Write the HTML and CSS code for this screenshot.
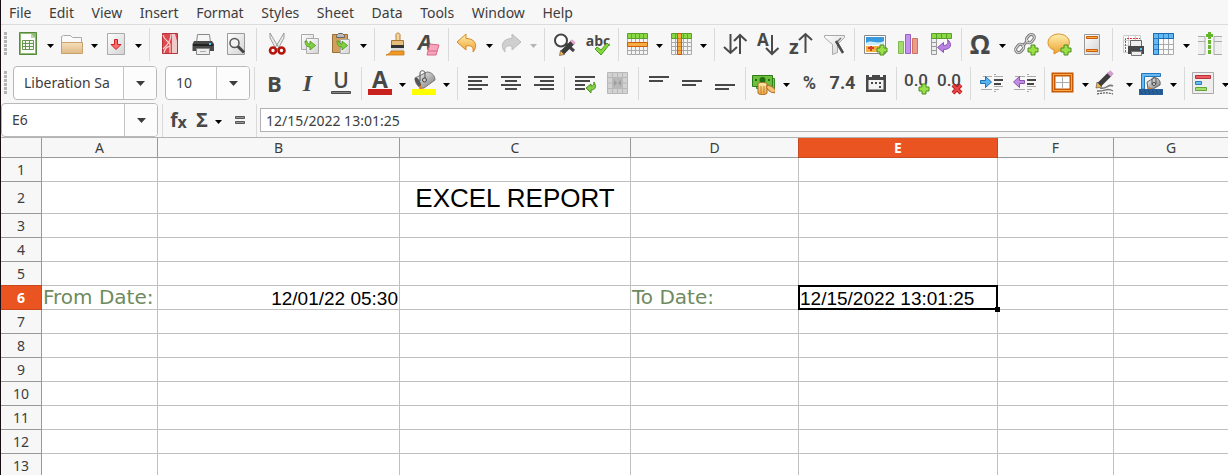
FILE: index.html
```html
<!DOCTYPE html>
<html lang="en">
<head>
<meta charset="utf-8">
<title>Spreadsheet</title>
<link rel="stylesheet" href="styles.css">
</head>
<body>
<svg class="defs" aria-hidden="true">
  <defs>
    <linearGradient id="paper" x2="1" y2="1"><stop offset="0" stop-color="#fff"/><stop offset="1" stop-color="#d2d2d2"/></linearGradient>
    <linearGradient id="tan" x2="0" y2="1"><stop offset="0" stop-color="#f5dfbd"/><stop offset="1" stop-color="#dfb984"/></linearGradient>
    <linearGradient id="gold" x2="0" y2="1"><stop offset="0" stop-color="#fff0b0"/><stop offset="1" stop-color="#eea02c"/></linearGradient>
    <linearGradient id="metal" x2="1" y2="1"><stop offset="0" stop-color="#fafafa"/><stop offset="1" stop-color="#777"/></linearGradient>
    <symbol id="plus" viewBox="0 0 12 12"><path d="M4 1h4v3h3v4H8v3H4V8H1V4h3z" fill="#9be048" stroke="#4b8f1c"/></symbol>
    <symbol id="arrow" viewBox="0 0 7 4"><path d="M0 0h7L3.500 4z"/></symbol>
    <symbol id="go" viewBox="0 0 12 12"><path d="M1 2C1 6 3 8 6 8v3l5.500-4.500L6 2v3C4 5 3 4 3 2z" fill="#7fd13e" stroke="#4b8f1c" stroke-width=".8"/></symbol>
    <symbol id="coin-hand" viewBox="0 0 24 24"><path d="M7 12c0-2 9-2 9 0v9c0 2-9 2-9 0z" fill="url(#gold)" stroke="#a9692b"/><path d="M10 14v7m3-7v7" stroke="#b98349"/><ellipse cx="20" cy="17" rx="5" ry="2.500" transform="rotate(35 20 17)" fill="#f6c070" stroke="#a9692b"/></symbol>
  </defs>
</svg>
<div class="app">
  <nav class="menubar" aria-label="Main menu">
    <div class="menus"><button>File</button><button>Edit</button><button>View</button><button>Insert</button><button>Format</button><button>Styles</button><button>Sheet</button><button>Data</button><button>Tools</button><button>Window</button><button>Help</button></div>
  </nav>

  <div class="toolbar standard" role="toolbar" aria-label="Standard">
    <span class="grip"></span>
    <button class="tool drop" aria-label="New">
      <svg class="icon" viewBox="0 0 24 24"><path d="M3.500.500h17v22h-17z" fill="#8fbb72" stroke="#568a3c"/><path d="M5 2h10l4 4v15H5z" fill="#fff"/><path d="M15 2v4h4z" fill="#b8d6a4"/><path d="M6.500 8.500h11v9h-11zM6.500 11.500h11m-11 3h11m-8-6v9m4-9v9" fill="#f3f8ef" stroke="#69964f"/></svg>
      <svg class="arrow"><use href="#arrow"/></svg></button>
    <button class="tool drop" aria-label="Open">
      <svg class="icon" viewBox="0 0 24 24"><path d="M1.500 21.500v-17l2-1h7l2 2h9v6" fill="#fafafa" stroke="#aaa"/><path d="M1.500 10.500h21v11h-21z" fill="url(#tan)" stroke="#c9a16c"/></svg>
      <svg class="arrow"><use href="#arrow"/></svg></button>
    <button class="tool drop" aria-label="Save">
      <svg class="icon" viewBox="0 0 24 24"><path d="M3.500 1.500h17v21h-17z" fill="url(#paper)" stroke="#aaa"/><path d="M10.500 7.500h3v5h3.500L12 17.500 7 12.500h3.500z" fill="#ff6b6b" stroke="#c92323"/></svg>
      <svg class="arrow"><use href="#arrow"/></svg></button>
    <span class="sep"></span>
    <button class="tool" aria-label="Export as PDF">
      <svg class="icon" viewBox="0 0 24 24"><path d="M4.500 1.500h15v20h-15z" fill="#dc4a50" stroke="#b5343a"/><path d="M14 2h3l2 7v12h-5z" fill="#f0c9c9"/><path d="M13 2c0 7-3 11-8 15M5 3c1 5 5 6 7 9v9M6 21c1-5 3-6 6-7" fill="none" stroke="#f8d3d3" stroke-width="1.200"/></svg></button>
    <button class="tool" aria-label="Print">
      <svg class="icon" viewBox="0 0 24 24"><path d="M6.500 2.500h12l1 8h-14z" fill="#f6f6f6" stroke="#888"/><path d="M3 9h18l2 3v7H1.500v-7z" fill="#4a4a4a"/><path d="M2 12h20v2H2z" fill="#222"/><path d="M18 11h2v2h-2z" fill="#4fc3ff"/><path d="M5.500 16.500h13v6h-13z" fill="#eee" stroke="#888"/><path d="M9 19.500h6" stroke="#aaa"/></svg></button>
    <button class="tool" aria-label="Print preview">
      <svg class="icon" viewBox="0 0 24 24"><path d="M3.500 1.500h17v21h-17z" fill="url(#paper)" stroke="#999"/><circle cx="10.500" cy="11" r="4.500" fill="#f2f2f2" stroke="#555" stroke-width="1.500"/><path d="M14 14.500l6 6" stroke="#444" stroke-width="3"/></svg></button>
    <span class="sep"></span>
    <button class="tool" aria-label="Cut">
      <svg class="icon" viewBox="0 0 24 24"><path d="M5 1l9 15-3 1-6-11zM19 1l-9 15 3 1 6-11z" fill="#e9e9e9" stroke="#888" stroke-width=".8"/><ellipse cx="8" cy="18.500" rx="3" ry="3" fill="none" stroke="#b5150c" stroke-width="2.600"/><ellipse cx="16.500" cy="18.500" rx="3" ry="3" fill="none" stroke="#b5150c" stroke-width="2.600"/></svg></button>
    <button class="tool" aria-label="Copy">
      <svg class="icon" viewBox="0 0 24 24"><path d="M3.500 2.500h12v15h-12z" fill="url(#paper)" stroke="#aaa"/><path d="M8.500 6.500h12v15h-12z" fill="url(#paper)" stroke="#aaa"/><use href="#go" x="6" y="7" width="12" height="12"/></svg></button>
    <button class="tool drop" aria-label="Paste">
      <svg class="icon" viewBox="0 0 24 24"><path d="M3.500 2.500h15v18h-15z" fill="#d1a05c" stroke="#9b6f35"/><path d="M7.500 5.500v-2l2-2h4l2 2v2z" fill="#bbb" stroke="#666"/><path d="M11.500 7.500h9v14h-9z" fill="url(#paper)" stroke="#aaa"/><use href="#go" x="7" y="7" width="12" height="12"/></svg>
      <svg class="arrow"><use href="#arrow"/></svg></button>
    <span class="sep"></span>
    <button class="tool" aria-label="Clone formatting">
      <svg class="icon" viewBox="0 0 24 24"><path d="M13 9V4c-1-4 5-4 4 0v5" fill="#f3d49b" stroke="#b98340"/><path d="M8.500 8.500h12v5h-12z" fill="#e7bd7b" stroke="#a97638"/><path d="M8 13h13v4H8z" fill="#333"/><path d="M8 16h13v3H8z" fill="#ddd"/><path d="M8 19h13v4H3c3-1 4-2 5-4z" fill="#ef9a24" stroke="#c9761b" stroke-width=".8"/></svg></button>
    <button class="tool" aria-label="Clear direct formatting">
      <svg class="icon" viewBox="0 0 24 24"><text class="glyph slant" x="2" y="18" font-size="22">A</text><path d="M14 12l9 1-3 10h-9z" fill="#f7a6bd" stroke="#d96787"/><path d="M12 19h9" stroke="#d96787"/></svg></button>
    <span class="sep"></span>
    <button class="tool drop" aria-label="Undo">
      <svg class="icon" viewBox="0 0 24 24"><path d="M2 10l9-8v4.500c10 0 12 8 7 13.500 1-5-2-7-7-6V18z" fill="url(#gold)" stroke="#d58a25"/></svg>
      <svg class="arrow"><use href="#arrow"/></svg></button>
    <button class="tool drop" aria-label="Redo" disabled>
      <svg class="icon" viewBox="0 0 24 24"><path d="M22 10l-9-8v4.500c-10 0-12 8-7 13.500-1-5 2-7 7-6V18z" fill="#cfcfcf" stroke="#bcbcbc"/></svg>
      <svg class="arrow"><use href="#arrow"/></svg></button>
    <span class="sep"></span>
    <button class="tool" aria-label="Find and replace">
      <svg class="icon" viewBox="0 0 24 24"><circle cx="8" cy="8.500" r="6" fill="#fff" stroke="#444" stroke-width="2"/><path d="M13 12l8 7" stroke="#444" stroke-width="3"/><path d="M9 21L20 10" stroke="#3b3b3b" stroke-width="5"/><path d="M19 11l2-2" stroke="#e9a6cf" stroke-width="5"/><path d="M6.500 23.500l1-5 4 4z" fill="#f2b64c" stroke="#333" stroke-width=".5"/></svg></button>
    <button class="tool" aria-label="Spelling">
      <svg class="icon" viewBox="0 0 24 24"><text class="glyph" x="12" y="14" text-anchor="middle" font-size="14">abc</text><path d="M9 17l2-2 4 3 6-7 2 2-8 10z" fill="#83d93e" stroke="#4b9a1c"/></svg></button>
    <span class="sep"></span>
    <button class="tool drop" aria-label="Row">
      <svg class="icon" viewBox="0 0 24 24"><path d="M2.500 6.500h20v16h-20zM2.500 14.500h20m-20 4h20m-16-12v16m4-16v16m4-16v16m4-16v16" fill="#f4f4f4" stroke="#aaa"/><path d="M2.500 1.500h20v5h-20z" fill="#8bd846" stroke="#5a9e2b"/><path d="M6.500 2v4m4-4v4m4-4v4m4-4v4" stroke="#5eae2c"/><path d="M2.500 10.500h20v4h-20z" fill="#f8ad42" stroke="#cc5c0c"/></svg>
      <svg class="arrow"><use href="#arrow"/></svg></button>
    <button class="tool drop" aria-label="Column">
      <svg class="icon" viewBox="0 0 24 24"><path d="M2.500 6.500h20v16h-20zM2.500 10.500h20m-20 4h20m-20 4h20m-16-12v16m8-16v16m4-16v16" fill="#f4f4f4" stroke="#aaa"/><path d="M2.500 1.500h20v5h-20z" fill="#8bd846" stroke="#5a9e2b"/><path d="M6.500 2v4m8-4v4m4-4v4" stroke="#5eae2c"/><path d="M8.500 1.500h4v21h-4z" fill="#f8ad42" stroke="#cc5c0c"/><path d="M9 6.500h3m-3 4h3m-3 4h3m-3 4h3" stroke="#dc7d1f"/></svg>
      <svg class="arrow"><use href="#arrow"/></svg></button>
    <span class="sep"></span>
    <button class="tool" aria-label="Sort">
      <svg class="icon line" viewBox="0 0 24 24"><path d="M7.500 2v19M1 15l6.500 6 6.500-6M17 22V3M11 9l6-6 6.500 6"/></svg></button>
    <button class="tool" aria-label="Sort ascending">
      <svg class="icon line" viewBox="0 0 24 24"><text class="glyph" x="1" y="14" font-size="17">A</text><path d="M16 3v19M10 16l6 6 6.500-6"/></svg></button>
    <button class="tool" aria-label="Sort descending">
      <svg class="icon line" viewBox="0 0 24 24"><text class="glyph" x="0" y="22" font-size="20">z</text><path d="M16.500 21V2M10 8l6.500-6L23 8"/></svg></button>
    <button class="tool" aria-label="AutoFilter">
      <svg class="icon" viewBox="0 0 24 24"><path d="M2.500 3.500h20v2l-7 7v8l-5 2v-10l-8-7z" fill="url(#paper)" stroke="#aaa"/><path d="M19 6l-5 5" stroke="#777" stroke-width="1.500"/><path d="M14 9l7 12" stroke="#4a4a4a" stroke-width="2.500"/></svg></button>
    <span class="sep"></span>
    <button class="tool" aria-label="Image">
      <svg class="icon" viewBox="0 0 24 24"><path d="M1.500 3.500h21v18h-21z" fill="#fff" stroke="#888"/><path d="M3 5h18v7H3z" fill="#3999df"/><path d="M3 11c6-4 10 2 18-2v4H3z" fill="#cceefa"/><path d="M3 14h18v6H3z" fill="#f4b143"/><path d="M5 16h6M8 14v5" stroke="#d3412b" stroke-width="2"/><use href="#plus" x="13" y="12" width="12" height="12"/></svg></button>
    <button class="tool" aria-label="Chart">
      <svg class="icon" viewBox="0 0 24 24"><path d="M2.500 9.500h5v12h-5z" fill="#a4dc70" stroke="#80b954"/><path d="M9.500 2.500h5v19h-5z" fill="#c393eb" stroke="#9860c7"/><path d="M16.500 6.500h5v15h-5z" fill="#ee9c8a" stroke="#cf705c"/></svg></button>
    <button class="tool" aria-label="Pivot table">
      <svg class="icon" viewBox="0 0 24 24"><path d="M2.500 6.500h5v16h-5zM2.500 10.500h5m-5 4h5m-5 4h5" fill="#eee" stroke="#999"/><path d="M2.500 1.500h20v5h-20z" fill="#8bd846" stroke="#5a9e2b"/><path d="M7.500 2v4m5-4v4m5-4v4" stroke="#5a9e2b"/><path d="M8.500 15.500l6-5v3c4 0 5-2 4-6 5 4 4 10-4 10v3z" fill="#ba82e2" stroke="#8b55b5"/></svg></button>
    <span class="sep"></span>
    <button class="tool drop" aria-label="Special character">
      <svg class="icon" viewBox="0 0 24 24"><text class="glyph" x="12" y="22" text-anchor="middle" font-size="26">Ω</text></svg>
      <svg class="arrow"><use href="#arrow"/></svg></button>
    <button class="tool" aria-label="Hyperlink">
      <svg class="icon" viewBox="0 0 24 24"><g fill="none" stroke="#777" stroke-width="3"><rect x="13" y="2" width="6" height="9" rx="3" transform="rotate(40 16 7)"/><rect x="3" y="12" width="6" height="9" rx="3" transform="rotate(40 6 16)"/><path d="M8 15l6-7"/></g><g fill="none" stroke="#ddd"><rect x="13" y="2" width="6" height="9" rx="3" transform="rotate(40 16 7)"/><rect x="3" y="12" width="6" height="9" rx="3" transform="rotate(40 6 16)"/><path d="M8 15l6-7"/></g><use href="#plus" x="13" y="12" width="12" height="12"/></svg></button>
    <button class="tool" aria-label="Comment">
      <svg class="icon" viewBox="0 0 24 24"><path d="M7 18C-2 15-1 3 11 2c15 0 15 16 1 17l-5 3z" fill="url(#gold)" stroke="#d6922e"/><use href="#plus" x="13" y="12" width="12" height="12"/></svg></button>
    <button class="tool" aria-label="Headers and footers">
      <svg class="icon" viewBox="0 0 24 24"><path d="M4.500 2.500h15v20h-15z" fill="url(#paper)" stroke="#999"/><path d="M6.500 4.500h11v2h-11zM6.500 17.500h11v2h-11z" fill="#f8ad42" stroke="#cc5c0c"/></svg></button>
    <span class="sep"></span>
    <button class="tool" aria-label="Define print area">
      <svg class="icon" viewBox="0 0 24 24"><path d="M2.500 3.500h17v17h-17zM2.500 8.500h17m-17 5h17m-12-10v17m7-17v17" fill="#fafafa" stroke="#ccc"/><path d="M4.500 20V6.500H19" fill="none" stroke="#e23535" stroke-dasharray="2 1"/><path d="M9.500 8.500h11v6h-11z" fill="#eee" stroke="#666"/><path d="M7 14h16v8H7z" fill="#484848"/><path d="M19 16h2v2h-2z" fill="#4fc3ff"/><path d="M10.500 19.500h10v4h-10z" fill="#eee" stroke="#777"/></svg></button>
    <button class="tool drop" aria-label="Freeze rows and columns">
      <svg class="icon" viewBox="0 0 24 24"><path d="M1.500 1.500h20v21h-20zM6.500 12.500h15m-15 5h15m-10-11v16m5-16v16" fill="#fafafa" stroke="#aaa"/><path d="M1.500 22.500v-21h20v5h-15v16z" fill="#63b9f1" stroke="#1d69b2"/><path d="M6.500 2v4m5-4v4m5-4v4M2 6.500h4m-4 6h4m-4 5h4" stroke="#2a7fc7"/></svg>
      <svg class="arrow"><use href="#arrow"/></svg></button>
    <button class="tool" aria-label="Split window">
      <svg class="icon" viewBox="0 0 24 24"><path d="M0 4.500h7v18H0M24 4.500h-8v18h8M0 9.500h7m9 0h8" fill="#efefef" stroke="#aaa"/><path d="M11.500 8v15" stroke="#64b62d" stroke-width="3" stroke-dasharray="4 1"/><path d="M8 3.500h7M11.500 0v7" stroke="#64b62d" stroke-width="3"/></svg></button>
  </div>

  <div class="toolbar formatting" role="toolbar" aria-label="Formatting">
    <span class="grip"></span>
    <div class="combo font-combo"><input type="text" aria-label="Font name" value="Liberation Sa"><button aria-label="Choose font"><svg class="big-arrow" viewBox="0 0 9 5"><path d="M0 0h9L4.500 5z"/></svg></button></div>
    <div class="combo size-combo"><input type="text" aria-label="Font size" value="10"><button aria-label="Choose font size"><svg class="big-arrow" viewBox="0 0 9 5"><path d="M0 0h9L4.500 5z"/></svg></button></div>
    <span class="sep"></span>
    <button class="tool letter" aria-label="Bold"><b>B</b></button>
    <button class="tool letter" aria-label="Italic"><i>I</i></button>
    <button class="tool" aria-label="Underline">
      <svg class="icon" viewBox="0 0 24 24"><text class="glyph plain" x="12" y="17" text-anchor="middle" font-size="21">U</text><path d="M2.500 20.500h19v2h-19z" fill="#888" stroke="#484848"/></svg></button>
    <span class="sep"></span>
    <button class="tool drop" aria-label="Font color">
      <svg class="icon" viewBox="0 0 24 24"><text class="glyph" x="12" y="17" text-anchor="middle" font-size="23">A</text><path d="M0 18h24v6H0z" fill="#c9211e"/></svg>
      <svg class="arrow"><use href="#arrow"/></svg></button>
    <button class="tool drop" aria-label="Background color">
      <svg class="icon" viewBox="0 0 24 24"><path d="M3 7l12-6c5 0 8 4 8 8L12 17c-5 1-9-4-9-10z" fill="url(#metal)" stroke="#777"/><ellipse cx="6" cy="11" rx="2" ry="5" transform="rotate(-30 6 11)" fill="#555"/><path d="M8 10V2c0-3 5-3 5 0v8" fill="none" stroke="#555"/><circle cx="12.500" cy="9" r="2" fill="#ccc" stroke="#444"/><path d="M8 14l3 4H7z" fill="#e87b23"/><path d="M0 18h24v6H0z" fill="#ff0"/></svg>
      <svg class="arrow"><use href="#arrow"/></svg></button>
    <span class="sep"></span>
    <button class="tool" aria-label="Align left"><svg class="icon bars" viewBox="0 0 24 24"><path d="M2 6h20M2 10h14M2 14h20M2 18h14"/></svg></button>
    <button class="tool" aria-label="Center"><svg class="icon bars" viewBox="0 0 24 24"><path d="M2 6h20M6 10h12M2 14h20M6 18h12"/></svg></button>
    <button class="tool" aria-label="Align right"><svg class="icon bars" viewBox="0 0 24 24"><path d="M2 6h20M8 10h14M2 14h20M8 18h14"/></svg></button>
    <span class="sep"></span>
    <button class="tool" aria-label="Wrap text"><svg class="icon bars" viewBox="0 0 24 24"><path d="M2 6h20M2 10h15M2 14h10M2 18h10"/><path class="fill" d="M13 17l5-4v2c2 0 3-1 3-4 3 5 1 8-3 8v3z" fill="#83cf48" stroke="#4b8f1c"/></svg></button>
    <button class="tool" aria-label="Merge cells" disabled><svg class="icon" viewBox="0 0 24 24"><path d="M1.500 1.500h20v21h-20zM1.500 6.500h20m-20 11h20m-15-16v21m5-21v5m0 11v5m5-21v21M1.500 12h5m10 0h5" fill="#d2d2d2" stroke="#b8b8b8"/><path d="M7 7h9v10H7z" fill="#b8b8b8"/><path d="M8 9l3 3-3 3zm7 0l-3 3 3 3z" fill="#9c9c9c"/></svg></button>
    <span class="sep"></span>
    <button class="tool" aria-label="Align top"><svg class="icon bars" viewBox="0 0 24 24"><path d="M2 6h20M2 10h14"/></svg></button>
    <button class="tool" aria-label="Center vertically"><svg class="icon bars" viewBox="0 0 24 24"><path d="M2 10h20M2 14h14"/></svg></button>
    <button class="tool" aria-label="Align bottom"><svg class="icon bars" viewBox="0 0 24 24"><path d="M2 14h20M2 18h14"/></svg></button>
    <span class="sep"></span>
    <button class="tool drop" aria-label="Format as currency">
      <svg class="icon" viewBox="0 0 24 24"><path d="M4.500 7.500h18v10h-18z" fill="#86c85c" stroke="#3e8a22"/><path d="M.500 4.500h20v11H.500z" fill="#6fbf3c" stroke="#2f7d18"/><circle cx="10.500" cy="9" r="3" fill="#226f12"/><path d="M3 9h2m11 0h2" stroke="#226f12" stroke-width="2"/><use href="#coin-hand" x="-1" y="1" width="24" height="24"/></svg>
      <svg class="arrow"><use href="#arrow"/></svg></button>
    <button class="tool symbol" aria-label="Format as percent">%</button>
    <button class="tool symbol" aria-label="Format as number">7.4</button>
    <button class="tool" aria-label="Format as date"><svg class="icon" viewBox="0 0 24 24"><path d="M2 4h3v2h3V4h8v2h3V4h3v17H2z" fill="#484848"/><path d="M4.500 9h15v9.500h-15z" fill="#f3f3f3"/><path d="M7 12h2m2 0h2m2 0h2M15 16h2" stroke="#484848" stroke-width="2"/></svg></button>
    <span class="sep"></span>
    <button class="tool" aria-label="Add decimal place"><svg class="icon" viewBox="0 0 24 24"><text class="glyph zero" x="11" y="15" text-anchor="middle" font-size="17">0.0</text><use href="#plus" x="13" y="12" width="12" height="12"/></svg></button>
    <button class="tool" aria-label="Delete decimal place"><svg class="icon" viewBox="0 0 24 24"><text class="glyph zero" x="11" y="15" text-anchor="middle" font-size="17">0.0</text><path d="M15 14l8 8m0-8l-8 8" stroke="#b81f1f" stroke-width="4"/><path d="M15 14l8 8m0-8l-8 8" stroke="#e84848" stroke-width="2"/></svg></button>
    <span class="sep"></span>
    <button class="tool" aria-label="Increase indent"><svg class="icon" viewBox="0 0 24 24"><path d="M4 5.500h9M2 18.500h11M15 3.500h2M15 5.500h9M15 15.500h9M15 18.500h5M15 20.500h2" stroke="#aaa"/><path d="M15 9h9M15 13h7" stroke="#484848" stroke-width="2"/><path d="M1.500 9.500h5v-4l6 5.500-6 5.500v-4h-5z" fill="#56b4ee" stroke="#246fb0"/></svg></button>
    <button class="tool" aria-label="Decrease indent"><svg class="icon" viewBox="0 0 24 24"><path d="M3 5.500h10M2 18.500h11M15 3.500h2M15 5.500h9M15 15.500h9M15 18.500h5M15 20.500h2" stroke="#aaa"/><path d="M15 9h9M15 13h7" stroke="#484848" stroke-width="2"/><path d="M12.500 9.500h-5v-4l-6 5.500 6 5.500v-4h5z" fill="#c08be3" stroke="#8a55b2"/></svg></button>
    <span class="sep"></span>
    <button class="tool drop" aria-label="Borders">
      <svg class="icon" viewBox="0 0 24 24"><path d="M2.500 3.500h18v16h-18z" fill="#fff" stroke="#c75a08" stroke-width="4"/><path d="M2.500 3.500h18v16h-18z" fill="none" stroke="#ffab42"/><path d="M11.500 5.500v12M4.500 11.500h14" stroke="#aaa"/></svg>
      <svg class="arrow"><use href="#arrow"/></svg></button>
    <button class="tool drop" aria-label="Border style">
      <svg class="icon" viewBox="0 0 24 24"><path d="M4 14L15 3" stroke="#3d3d3d" stroke-width="5"/><path d="M14 4l3-3" stroke="#d49bd1" stroke-width="5"/><path d="M1 17l1-6 5 5z" fill="#f2b64c" stroke="#333" stroke-width=".5"/><path d="M5 17c7 2 8-5 13-2M2 20c8 1 10-4 16 0" fill="none" stroke="#777" stroke-width="1.500"/><path d="M2 23c6-1 9-2 16 0" fill="none" stroke="#333" stroke-dasharray="2 1"/></svg>
      <svg class="arrow"><use href="#arrow"/></svg></button>
    <button class="tool drop" aria-label="Border color">
      <svg class="icon" viewBox="0 0 24 24"><path d="M2.500 18V2.500h19v3h-16V18z" fill="#66b9f1" stroke="#2678bd"/><path d="M8 11l7-4c4-1 7 3 6 7l-7 4H9z" fill="url(#metal)" stroke="#666"/><path d="M13 14V8c0-2 4-2 4 0v5" fill="none" stroke="#555"/><circle cx="15" cy="13" r="1.500" fill="#eee" stroke="#444"/><path d="M10 15l3 4h-4z" fill="#e87b23"/><path d="M0 18h24v6H0z" fill="#2a6099"/><path d="M1 20h22M2 22h21" stroke="#143f78" stroke-dasharray="1 3"/></svg>
      <svg class="arrow"><use href="#arrow"/></svg></button>
    <span class="sep"></span>
    <button class="tool drop" aria-label="Conditional formatting">
      <svg class="icon" viewBox="0 0 24 24"><path d="M1.500 1.500h21v21h-21z" fill="#eee" stroke="#aaa"/><path d="M4.500 4.500h15v3h-15z" fill="#e85b62" stroke="#b93239"/><path d="M4.500 10.500h6v3h-6z" fill="#65bdf3" stroke="#297ebe"/><path d="M4.500 16.500h11v3h-11z" fill="#a4dc70" stroke="#66a637"/></svg>
      <svg class="arrow"><use href="#arrow"/></svg></button>
  </div>

  <div class="formula-bar">
    <div class="combo name-combo"><input type="text" aria-label="Name box" value="E6"><button aria-label="Choose range"><svg class="big-arrow" viewBox="0 0 9 5"><path d="M0 0h9L4.500 5z"/></svg></button></div>
    <span class="sep"></span>
    <button class="tool fx" aria-label="Function wizard">f<small>x</small></button>
    <button class="tool drop sum" aria-label="Select function"><span>Σ</span><svg class="arrow"><use href="#arrow"/></svg></button>
    <button class="tool formula" aria-label="Formula"><svg class="icon" viewBox="0 0 24 24"><path d="M7.500 8.500h9v2h-9zM7.500 13.500h9v2h-9z" fill="#999" stroke="#555"/></svg></button>
    <span class="sep"></span>
    <input class="formula-input" type="text" aria-label="Formula input" value="12/15/2022 13:01:25">
  </div>

  <main class="sheet">
    <table>
      <colgroup><col class="c-head"><col class="c-a"><col class="c-b"><col class="c-c"><col class="c-d"><col class="c-e"><col class="c-f"><col></colgroup>
      <thead><tr><th></th><th>A</th><th>B</th><th>C</th><th>D</th><th class="selected">E</th><th>F</th><th>G</th></tr></thead>
      <tbody>
        <tr><th>1</th><td></td><td></td><td></td><td></td><td></td><td></td><td></td></tr>
        <tr class="title-row"><th>2</th><td></td><td></td><td class="title">EXCEL REPORT</td><td></td><td></td><td></td><td></td></tr>
        <tr><th>3</th><td></td><td></td><td></td><td></td><td></td><td></td><td></td></tr>
        <tr><th>4</th><td></td><td></td><td></td><td></td><td></td><td></td><td></td></tr>
        <tr><th>5</th><td></td><td></td><td></td><td></td><td></td><td></td><td></td></tr>
        <tr><th class="selected">6</th><td class="label">From Date:</td><td class="date right">12/01/22 05:30</td><td></td><td class="label">To Date:</td><td class="date active">12/15/2022 13:01:25</td><td></td><td></td></tr>
        <tr><th>7</th><td></td><td></td><td></td><td></td><td></td><td></td><td></td></tr>
        <tr><th>8</th><td></td><td></td><td></td><td></td><td></td><td></td><td></td></tr>
        <tr><th>9</th><td></td><td></td><td></td><td></td><td></td><td></td><td></td></tr>
        <tr><th>10</th><td></td><td></td><td></td><td></td><td></td><td></td><td></td></tr>
        <tr><th>11</th><td></td><td></td><td></td><td></td><td></td><td></td><td></td></tr>
        <tr><th>12</th><td></td><td></td><td></td><td></td><td></td><td></td><td></td></tr>
        <tr><th>13</th><td></td><td></td><td></td><td></td><td></td><td></td><td></td></tr>
      </tbody>
    </table>
  </main>
</div>
</body>
</html>
```
FILE: styles.css
```css
* { box-sizing: border-box; }
body { margin: 0; overflow: hidden; font: 14px/20px "Noto Sans", "Open Sans", sans-serif; color: #3d3d3d; }
button, input { font: inherit; color: inherit; margin: 0; padding: 0; border: 0; background: none; }
.defs { position: absolute; width: 0; height: 0; }
.app { display: flex; flex-direction: column; height: 100vh; border-left: 1px solid #170d14; background: #f7f7f7; }

.menubar { flex: none; padding: 2px 8px 0; border-bottom: 1px solid #dcdcdc; line-height: 22px; }
.menus { display: flex; justify-content: space-between; max-width: 564px; }

.toolbar { display: flex; flex: none; align-items: center; overflow: hidden; padding-left: 3px; }
.standard { height: 38px; }
.formatting { height: 40px; }
.grip { flex: none; width: 3px; height: 24px; margin-right: 6px; background: repeating-linear-gradient(#b4b4b4 0 3px, #f7f7f7 3px 4px); }
.sep { flex: none; width: 8px; height: 33px; background: linear-gradient(#dadada, #dadada) 4px 0 / 1px 100% no-repeat; }
.tool { display: flex; flex: none; align-items: center; justify-content: center; width: 33px; height: 32px; }
.drop { width: 44px; justify-content: flex-start; padding-left: 3px; }
.icon { display: block; flex: none; width: 24px; height: 24px; overflow: visible; fill: none; }
.arrow { flex: none; width: 7px; height: 4px; margin: 3px 0 0 7px; fill: #000; }
.tool:disabled .arrow { fill: #b5b5b5; }
.line { stroke: #4a4a4a; stroke-width: 2; }
.bars { stroke: #484848; stroke-width: 2; }
.bars .fill { stroke-width: 1; }
.glyph { font-family: "Open Sans", sans-serif; font-weight: 700; fill: #484848; stroke: none; }
.glyph.slant { font-style: italic; }
.glyph.plain { font-weight: 600; }
.glyph.zero { font-family: "Roboto", sans-serif; font-weight: 500; }
.letter { color: #484848; font: 22px/32px "Open Sans", sans-serif; }
.letter i { font-family: "Liberation Serif", serif; font-weight: 700; font-size: 24px; }
.symbol { color: #484848; font: 700 18px/32px "Roboto", sans-serif; }

.combo { display: flex; flex: none; height: 34px; border: 1px solid #b9b9b9; border-radius: 4px; background: #fff; overflow: hidden; }
.combo input { flex: 1; min-width: 0; padding-left: 10px; outline: 0; }
.combo button { display: flex; align-items: center; justify-content: center; width: 33px; border-left: 1px solid #c4c4c4; background: #fcfcfc; }
.big-arrow { width: 9px; height: 5px; fill: #3d3d3d; }
.font-combo { width: 144px; margin-right: 8px; }
.size-combo { width: 85px; }

.formula-bar { display: flex; flex: none; align-items: center; height: 35px; border-bottom: 1px solid #b2b2b2; }
.name-combo { width: 157px; }
.fx { width: 25px; color: #484848; font: 700 19px/28px "Open Sans", sans-serif; }
.fx small { font-size: 16px; padding-top: 4px; }
.sum { width: 36px; padding-left: 5px; color: #484848; font: 700 20px/28px "Open Sans", sans-serif; }
.formula { width: 25px; }
.formula-input { flex: 1; min-width: 0; height: 24px; padding-left: 5px; border: 1px solid #b2b2b2; border-right: 0; background: #fff; outline: 0; }

.sheet { flex: 1; min-height: 0; overflow: hidden; background: #fff; }
table { width: 100%; table-layout: fixed; border-collapse: separate; border-spacing: 0; }
.c-head { width: 41px; }
.c-a, .c-f { width: 116px; }
.c-b { width: 242px; }
.c-c { width: 231px; }
.c-d { width: 168px; }
.c-e { width: 199px; }
th, td { height: 24px; padding: 0; border: solid #c0c0c0; border-width: 0 1px 1px 0; white-space: nowrap; line-height: 20px; }
td:last-child, th:last-child { border-right: 0; }
th { border-color: #999; background: #f7f7f7; font-weight: 400; }
thead th { height: 20px; line-height: 19px; }
th.selected { border-color: #c8481f; background: #e95420; color: #fff; font-weight: 700; }
thead th.selected { box-shadow: -1px 0 #c8481f; }
tbody th.selected { box-shadow: 0 -1px #c8481f; }
.title-row td { height: 32px; }
.title { color: #000; text-align: center; font: 26px/30px "Liberation Sans", sans-serif; }
.label { padding: 0 1px 2px; color: #6e8b60; font: 20px/20px "DejaVu Sans", sans-serif; }
.date { padding: 2px 1px 0; color: #000; font: 19px/21px "Liberation Sans", sans-serif; }
.right { text-align: right; }
.active { position: relative; }
.active::before { content: ""; position: absolute; inset: -1px; border: 2px solid #000; }
.active::after { content: ""; position: absolute; right: -3px; bottom: -3px; width: 5px; height: 5px; background: #000; }
```
